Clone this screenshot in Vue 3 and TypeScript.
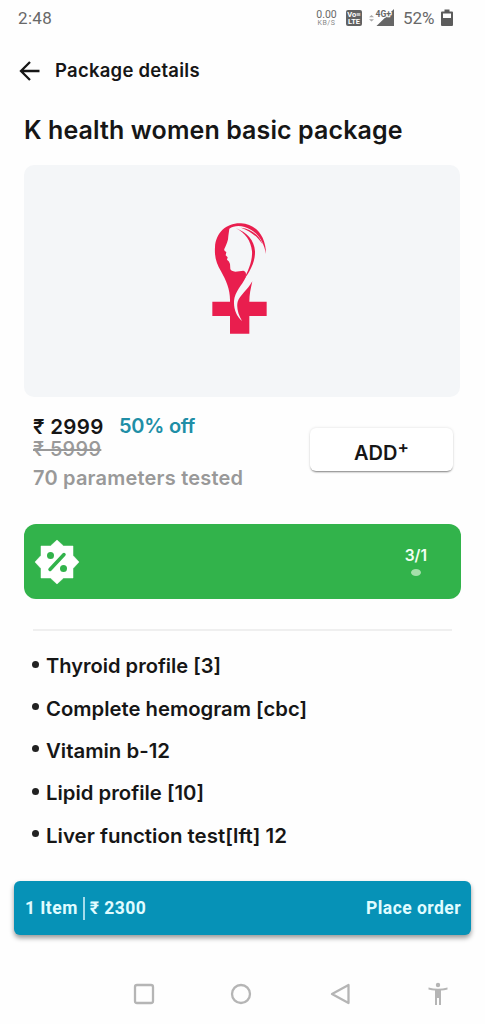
<script setup lang="ts">
interface TestItem {
  id: number
  label: string
  width: number
}

const tests: TestItem[] = [
  { id: 1, label: 'Thyroid profile [3]', width: 175 },
  { id: 2, label: 'Complete hemogram [cbc]', width: 261 },
  { id: 3, label: 'Vitamin b-12', width: 124 },
  { id: 4, label: 'Lipid profile [10]', width: 158 },
  { id: 5, label: 'Liver function test[lft] 12', width: 241 },
]
</script>

<template>
  <div class="screen">
    <header class="status">
      <span class="clock">2:48</span>
      <div class="indicators">
        <span class="speed"><b>0.00</b><i>KB/S</i></span>
        <span class="volte"><span>Vo≡</span><span>LTE</span></span>
        <svg class="signal" width="26" height="18" viewBox="0 0 26 18">
          <path d="M0 8.2 2.5 6 5 8.2zM0 10.2 2.5 12.4 5 10.2z" fill="#aaa" />
          <path d="M7.5 17 25 0V17z" fill="#666" />
          <text x="6.5" y="7.5" stroke="#fff" stroke-width="2" paint-order="stroke">4G+</text>
        </svg>
        <span class="percent">52%</span>
        <svg class="battery" width="12" height="18" viewBox="0 0 12 18">
          <path d="M3.5 0.5h5v2H11q1 0 1 1V16q0 1-1 1H1q-1 0-1-1V3.500q0-1 1-1h2.500z" fill="#5c5c5c" />
          <path d="M2 4.500h8V9H2z" fill="#fff" />
        </svg>
      </div>
    </header>

    <nav class="toolbar">
      <svg width="22" height="20" viewBox="0 0 22 20" fill="none" stroke="#161616" stroke-width="2.3">
        <path d="M20.500 10H2M11 1 2 10l9 9" />
      </svg>
      <span>Package details</span>
    </nav>

    <h1>K health women basic package</h1>

    <section class="hero">
      <svg width="100" height="135" viewBox="0 0 300 405">
        <g fill="#e91e4e">
          <path d="M67 275H120C121 239 109 213 93 184C79 160 73 140 75 112C77 67 111 38 153 40C197 42 228 78 228 132C221 93 199 61 164 51C147 46 129 48 118 56L115 78C115 92 109 104 103 117Q101 123 109 126L107 136L113 142L111 149Q118 153 120 162L121 177Q123 184 136 185L160 182C168 183 170 192 166 204C157 224 134 246 132 273C131 299 140 319 156 333C144 312 139 292 143 275C149 256 173 240 187 214C182 237 178 253 178 275H230V318H178V371H120V318H67Z" />
          <path d="M137 54C172 68 193 91 195 124C196 157 180 184 159 213C174 184 188 153 186 124C183 92 166 69 137 54Z" />
          <path d="M153 53C184 57 208 76 218 103C203 80 181 63 153 53Z" />
        </g>
      </svg>
    </section>

    <section class="offer">
      <div class="pricing">
        <div class="price"><span class="now">₹ 2999</span><span class="discount">50% off</span></div>
        <div class="before"><span>₹ 5999</span></div>
        <div class="count">70 parameters tested</div>
      </div>
      <button class="add" type="button"><span>ADD</span><sup>+</sup></button>
    </section>

    <section class="coupon">
      <svg width="46" height="46" viewBox="-23 -23 46 46">
        <path d="M0-22 6.500-16H16V-6.500L22 0 16 6.500V16H6.500L0 22-6.500 16H-16V6.500L-22 0-16-6.500V-16H-6.500Z" fill="#fff" stroke="#fff" stroke-linejoin="round" stroke-width="0.500" />
        <g fill="#32b34b">
          <circle cx="-6.500" cy="-6.500" r="3.500" />
          <circle cx="6.500" cy="6.500" r="3.500" />
          <path d="M-7 7.500 7-7.500" stroke="#32b34b" stroke-width="3.500" stroke-linecap="round" />
        </g>
      </svg>
      <div class="pager"><span>3/1</span><i /></div>
    </section>

    <hr />

    <ul>
      <li v-for="test in tests" :key="test.id">
        <i />
        <svg :width="test.width + 2" height="28"><text x="0" y="21" :textLength="test.width" lengthAdjust="spacingAndGlyphs">{{ test.label }}</text></svg>
      </li>
    </ul>

    <footer class="order">
      <div class="summary"><span>1 Item</span><i /><span>₹ 2300</span></div>
      <span class="place">Place order</span>
    </footer>

    <div class="system">
      <svg width="22" height="22" viewBox="0 0 22 22"><rect x="2" y="2" width="18" height="18" rx="2" /></svg>
      <svg width="22" height="22" viewBox="0 0 22 22"><circle cx="11" cy="11" r="9" /></svg>
      <svg class="back" width="22" height="22" viewBox="0 0 22 22"><path d="M18.500 2V20L2 11Z" stroke-linejoin="round" /></svg>
      <svg class="person" width="22" height="24" viewBox="0 0 22 24">
        <circle cx="11" cy="3" r="2.200" />
        <path d="M1.500 5.500Q11 8 20.500 5.500V7.500Q17 8.500 14 8.500V23H12V16H10V23H8V8.500Q5 8.500 1.500 7.500Z" />
      </svg>
    </div>
  </div>
</template>

<style>
body {
  background: #fefefe;
}
</style>

<style scoped>
.screen {
  width: 485px;
  height: 1024px;
  box-sizing: border-box;
  overflow: hidden;
  display: flex;
  flex-direction: column;
  background: #fefefe;
  color: #161616;
  font-family: Inter, "Noto Sans", sans-serif;
}
.status {
  height: 36px;
  padding: 0 32px 0 18px;
  display: flex;
  flex: none;
  align-items: center;
  justify-content: space-between;
  color: #686868;
  font-family: Roboto, sans-serif;
}
.clock {
  font-size: 17px;
  letter-spacing: 0.35px;
}
.indicators {
  display: flex;
  align-items: center;
}
.speed {
  display: flex;
  flex-direction: column;
  align-items: center;
  width: 21px;
  margin-right: 9px;
}
.speed b {
  font: 400 10.5px/10px Roboto, sans-serif;
}
.speed i {
  font: 400 7px/7px Roboto, sans-serif;
  letter-spacing: 0.5px;
  color: #888;
}
.volte {
  width: 16px;
  height: 16px;
  margin-right: 7px;
  display: flex;
  flex-direction: column;
  align-items: center;
  justify-content: center;
  border-radius: 2px;
  background: #626262;
  color: #fff;
  font: 700 7.500px/7px Roboto, sans-serif;
}
.signal text {
  font: 700 8.500px Roboto, sans-serif;
  fill: #666;
}
.percent {
  margin: 0 5px 0 8px;
  width: 33px;
  font-size: 17px;
}
.toolbar {
  height: 70px;
  padding-left: 19px;
  display: flex;
  flex: none;
  align-items: center;
  gap: 14px;
  font-size: 18.500px;
  letter-spacing: 0.25px;
  font-weight: 600;
}
.toolbar span {
  margin-top: -2px;
}
h1 {
  height: 59px;
  margin: 0 0 0 24px;
  flex: none;
  font-size: 25px;
  letter-spacing: 0.1px;
  font-weight: 600;
  line-height: 48px;
  white-space: nowrap;
}
.hero {
  height: 232px;
  margin: 0 25px 0 24px;
  padding: 45px 0 0 166px;
  box-sizing: border-box;
  flex: none;
  border-radius: 10px;
  background: #f4f6f8;
}
.offer {
  height: 127px;
  padding: 16px 32px 0 33px;
  box-sizing: border-box;
  display: flex;
  flex: none;
  justify-content: space-between;
}
.pricing {
  white-space: nowrap;
}
.price {
  display: flex;
  font-size: 20px;
  line-height: 27px;
  font-weight: 600;
}
.now {
  width: 86px;
  font-size: 20.500px;
  letter-spacing: 0.3px;
}
.discount {
  letter-spacing: -0.25px;
  color: #208ea6;
}
.before {
  color: #999;
  font-size: 20px;
  letter-spacing: 0.3px;
  line-height: 18px;
  font-weight: 500;
}
.before span {
  text-decoration: line-through;
  text-decoration-thickness: 2px;
}
.count {
  margin-top: 7px;
  color: #999;
  font-size: 20px;
  letter-spacing: 0.2px;
  line-height: 27px;
  font-weight: 600;
}
.add {
  width: 143px;
  height: 43px;
  margin: 15px 0 0;
  padding: 6px 0 0;
  border: 0;
  border-radius: 6px;
  display: flex;
  align-items: center;
  justify-content: center;
  background: #fff;
  color: #161616;
  box-shadow: 0 2px 2px -1px #0007, 0 0 3px #0002;
  font: 600 20px Inter, sans-serif;
}
.add sup {
  font-size: 17px;
  line-height: 15px;
  margin: -10px 0 0 0;
}
.coupon {
  height: 75px;
  margin: 0 24px;
  padding: 0 34px 0 10px;
  box-sizing: border-box;
  display: flex;
  flex: none;
  align-items: center;
  justify-content: space-between;
  border-radius: 12px;
  background: #32b34b;
  color: #f3fff3;
}
.pager {
  display: flex;
  flex-direction: column;
  align-items: center;
  margin-top: -2px;
  font-size: 15.500px;
  line-height: 22px;
  font-weight: 600;
}
.pager i {
  width: 10px;
  height: 7px;
  margin-top: 2px;
  border-radius: 50%;
  background: #a5dfaa;
}
hr {
  width: 419px;
  height: 2px;
  margin: 30px 0 0 33px;
  flex: none;
  border: 0;
  background: #efefef;
}
ul {
  height: 250px;
  margin: 0;
  padding: 14px 0 0 32px;
  box-sizing: border-box;
  flex: none;
  list-style: none;
}
li {
  height: 42.400px;
  display: flex;
  align-items: center;
  gap: 7px;
}
li i {
  width: 7px;
  height: 7px;
  margin-top: -4px;
  border-radius: 50%;
  background: #222;
}
li text {
  fill: #161616;
  font: 600 20px Inter, sans-serif;
}
.order {
  height: 54px;
  margin: 0 14px;
  padding: 0 10px 0 11px;
  box-sizing: border-box;
  display: flex;
  flex: none;
  align-items: center;
  justify-content: space-between;
  border-radius: 6px;
  background: #0692b7;
  box-shadow: 0 3px 5px #0006;
  color: #e0fcff;
  font: 700 17.500px Roboto, sans-serif;
  letter-spacing: 0.45px;
}
.summary {
  display: flex;
  align-items: center;
}
.summary i {
  width: 2px;
  height: 23px;
  margin: 0 5px;
  background: #a4dceb;
}
.system {
  flex: 1;
  padding: 29px 36px 0 133px;
  display: flex;
  align-items: flex-start;
  justify-content: space-between;
}
.system svg {
  margin-top: 19px;
  fill: none;
  stroke: #b5b5b5;
  stroke-width: 2.300;
}
.system .back {
  margin-left: 3px;
}
.system .person {
  margin-top: 18px;
  fill: #b5b5b5;
  stroke: none;
}
</style>
